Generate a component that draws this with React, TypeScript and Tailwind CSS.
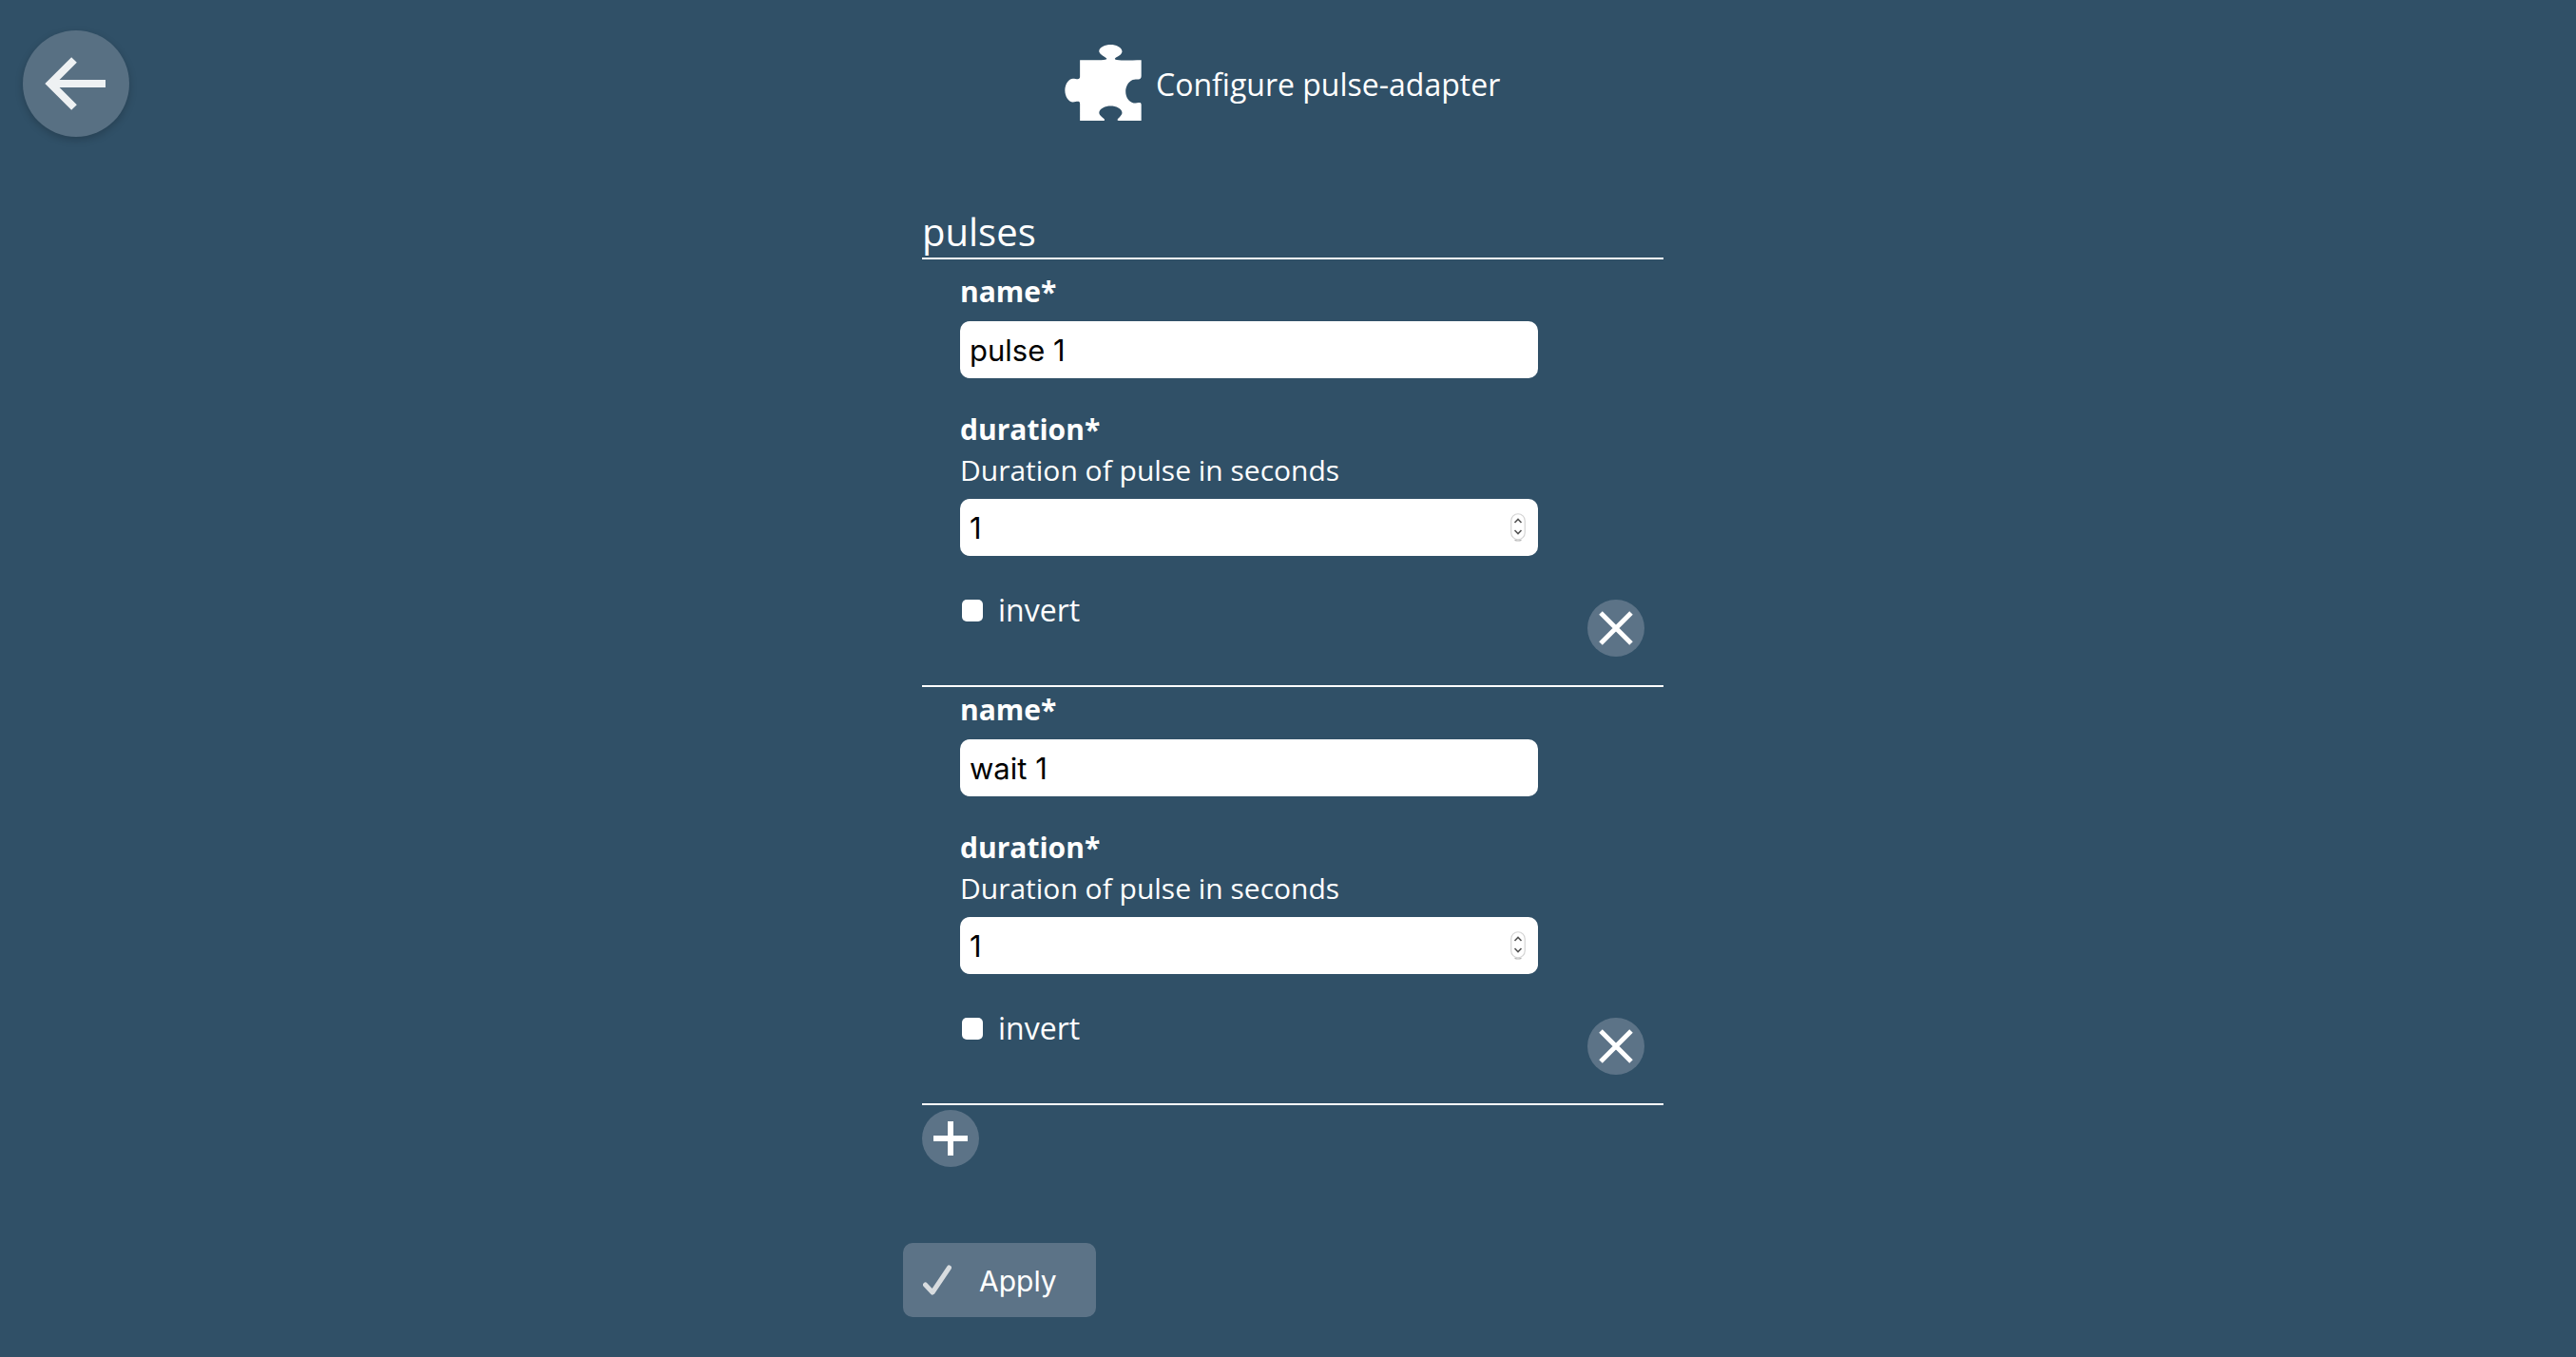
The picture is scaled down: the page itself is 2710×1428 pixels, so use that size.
import React from "react";

const sans = "font-['Open_Sans',sans-serif]";

function Spinner() {
  return (
    <svg className="absolute left-[579px] top-[15px]" width="16" height="30" viewBox="0 0 16 30" fill="none">
      <rect x="0.75" y="0.75" width="14.5" height="27" rx="7.25" fill="#fff" stroke="#d4d4d4" strokeWidth="1.2" />
      <path d="M4.5 28.4 Q8 29.6 11.5 28.4" stroke="#b5b5b5" strokeWidth="1.2" />
      <path d="M4.5 10 L8 6.5 L11.5 10" stroke="#555" strokeWidth="1.6" />
      <path d="M4.5 18 L8 21.5 L11.5 18" stroke="#555" strokeWidth="1.6" />
    </svg>
  );
}

function RemoveButton() {
  return (
    <button className="flex h-[60px] w-[60px] items-center justify-center rounded-full bg-[#5c7387]">
      <svg width="36" height="36" viewBox="0 0 36 36" stroke="#fff" strokeWidth="5">
        <path d="M2 2 L34 34 M34 2 L2 34" />
      </svg>
    </button>
  );
}

function Pulse({ name, first }: { name: string; first?: boolean }) {
  return (
    <div className={`border-b-2 border-white pb-[30px] pl-10 pr-5 ${first ? "pt-[13px]" : "pt-[3px]"}`}>
      <div className="text-[30px] font-bold leading-[42px]">name*</div>
      <input
        defaultValue={name}
        className="mt-[10px] block h-[60px] w-[608px] rounded-[10px] bg-white px-[10px] font-['Inter',sans-serif] text-[31px] text-black outline-none"
      />
      <div className="mb-px mt-[33px] text-[30px] font-bold leading-[41px]">duration*</div>
      <div className="text-[30px] leading-[44px]">Duration of pulse in seconds</div>
      <div className="relative mt-2 w-[608px]">
        <input
          defaultValue="1"
          className="block h-[60px] w-full rounded-[10px] bg-white px-[10px] font-['Inter',sans-serif] text-[31px] text-black outline-none"
        />
        <Spinner />
      </div>
      <div className="mt-[46px] flex items-start justify-between">
        <label className="-mt-px flex items-center gap-[16px] text-[32px] leading-[24px]">
          <input type="checkbox" className="ml-[2px] h-[23px] w-[22px] appearance-none rounded-[5px] bg-white" />
          <span>invert</span>
        </label>
        <RemoveButton />
      </div>
    </div>
  );
}

export default function App() {
  return (
    <div className={`relative min-h-screen bg-[#305067] text-white ${sans}`}>
      <button className="absolute left-6 top-8 flex h-[112px] w-[112px] items-center justify-center rounded-full bg-[#587083] shadow-[0_3px_8px_rgba(0,0,0,0.2)]">
        <svg width="112" height="112" viewBox="0 0 112 112" fill="none" stroke="#eef1f3" strokeWidth="8">
          <path d="M29 56 H87" />
          <path d="M54 31 L29 56 L54 81" />
        </svg>
      </button>

      <div className="mx-auto w-[810px]">
        <div className="flex items-center pl-[170px] pt-[47px]">
          <svg width="81" height="80" viewBox="93 82 239 238" fill="#fff">
            <path d="M140 130 C170 130 205 132 222 128 C232 124 205 118 200 104 C198 90 220 82 236 82 C252 82 272 90 272 104 C270 118 245 122 250 128 C262 133 300 130 332 130 L332 180 C332 195 318 188 305 192 C290 198 283 215 283 228 C283 245 292 262 308 265 C320 266 332 258 332 270 L332 320 L262 320 C248 318 270 308 272 296 C272 282 252 274 236 274 C220 274 200 282 200 296 C202 308 225 316 215 320 L140 320 L140 268 C140 255 128 262 118 262 C105 262 93 245 93 225 C93 205 105 188 118 188 C128 188 140 195 140 182 Z" />
          </svg>
          <h1 className="ml-[15px] pt-1 text-[32px] leading-[44px]">Configure pulse-adapter</h1>
        </div>

        <div className="mt-[90px] pl-5 pr-[10px]">
          <h2 className="h-[56px] border-b-2 border-white text-[40px] leading-[54px]">pulses</h2>
          <Pulse name="pulse 1" first />
          <Pulse name="wait 1" />
          <button className="mt-[5px] flex h-[60px] w-[60px] items-center justify-center rounded-full bg-[#5c7387]">
            <svg width="36" height="36" viewBox="0 0 36 36" stroke="#fff" strokeWidth="6">
              <path d="M0 18 H36 M18 0 V36" />
            </svg>
          </button>
        </div>

        <button className="mt-[80px] flex h-[78px] w-[203px] items-center rounded-[10px] bg-[#5c7387] pl-[21px]">
          <svg width="30" height="32" viewBox="0 0 30 32" fill="none" stroke="#d8dcdf" strokeWidth="5" strokeLinecap="round" strokeLinejoin="round">
            <path d="M2.5 21 L10 29 L27.5 3" />
          </svg>
          <span className="ml-[29px] pt-[2px] font-['Inter',sans-serif] text-[30px]">Apply</span>
        </button>
      </div>
    </div>
  );
}
